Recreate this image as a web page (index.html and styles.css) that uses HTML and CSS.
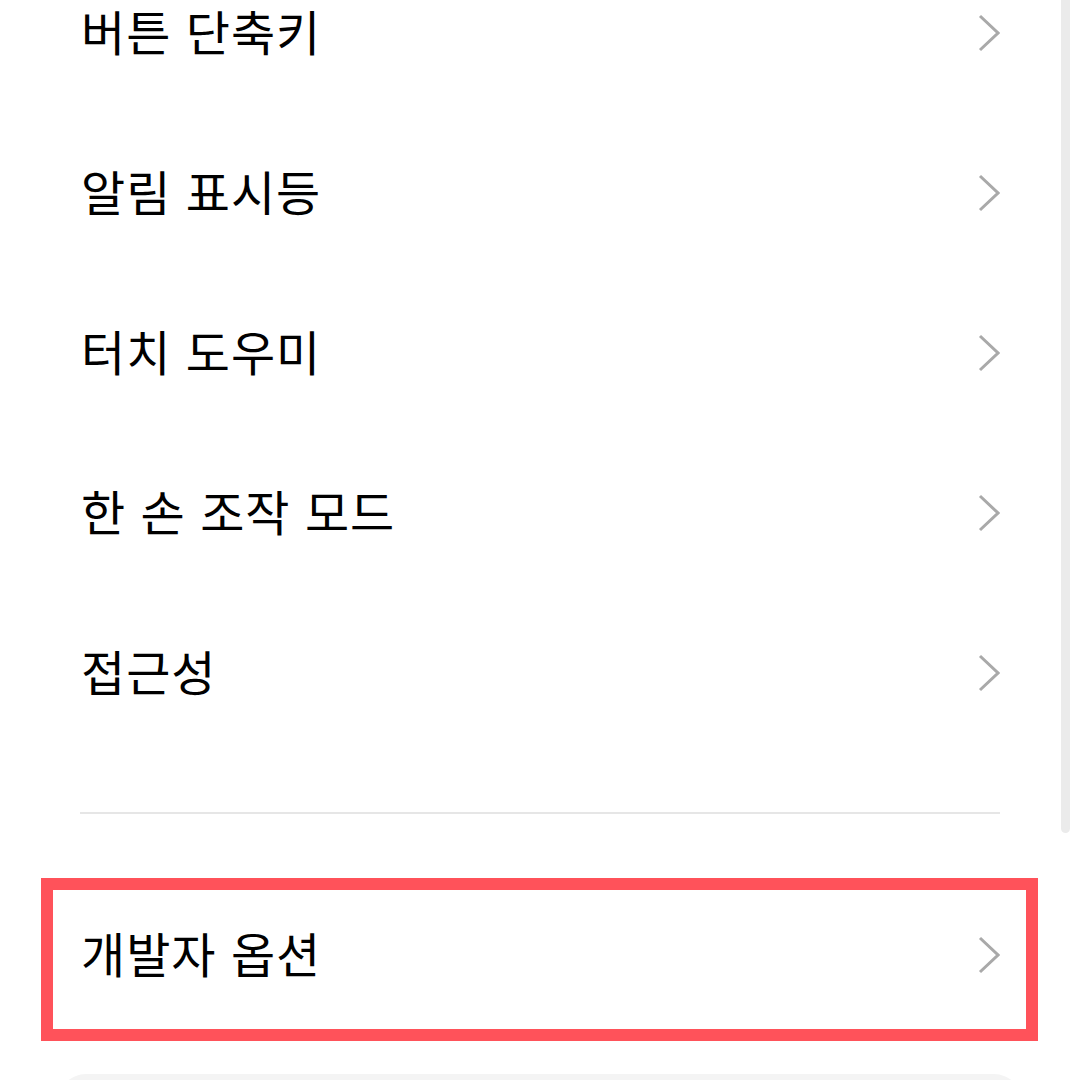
FILE: index.html
```html
<!DOCTYPE html>
<html lang="ko">
<head>
    <meta charset="UTF-8">
    <meta name="viewport" content="width=device-width, initial-scale=1.0">
    <title>설정</title>
    <link rel="stylesheet" href="styles.css">
</head>
<body>
    <div class="screen">
        <div class="settings-list">
            <div class="setting-row">
                <span class="setting-label">버튼 단축키</span>
                <svg class="chevron" width="22" height="38" viewBox="0 0 22 38"><polyline points="2,2 20,19 2,36"/></svg>
            </div>
            <div class="setting-row">
                <span class="setting-label">알림 표시등</span>
                <svg class="chevron" width="22" height="38" viewBox="0 0 22 38"><polyline points="2,2 20,19 2,36"/></svg>
            </div>
            <div class="setting-row">
                <span class="setting-label">터치 도우미</span>
                <svg class="chevron" width="22" height="38" viewBox="0 0 22 38"><polyline points="2,2 20,19 2,36"/></svg>
            </div>
            <div class="setting-row">
                <span class="setting-label">한 손 조작 모드</span>
                <svg class="chevron" width="22" height="38" viewBox="0 0 22 38"><polyline points="2,2 20,19 2,36"/></svg>
            </div>
            <div class="setting-row">
                <span class="setting-label">접근성</span>
                <svg class="chevron" width="22" height="38" viewBox="0 0 22 38"><polyline points="2,2 20,19 2,36"/></svg>
            </div>
        </div>

        <div class="divider"></div>

        <div class="settings-list highlighted">
            <div class="setting-row">
                <span class="setting-label">개발자 옵션</span>
                <svg class="chevron" width="22" height="38" viewBox="0 0 22 38"><polyline points="2,2 20,19 2,36"/></svg>
            </div>
            <div class="highlight-box"></div>
        </div>

        <div class="next-card"></div>

        <div class="scrollbar"></div>
    </div>
</body>
</html>
```

FILE: styles.css
```css
body {
    margin: 0;
    padding: 0;
    background-color: #ffffff;
    font-family: "Noto Sans CJK KR", "Noto Sans", sans-serif;
    color: #000000;
}

.screen {
    position: relative;
    width: 1080px;
    height: 1080px;
    overflow: hidden;
}

.settings-list {
    margin-top: -47px;
    padding: 0 80px;
}

.setting-row {
    display: flex;
    align-items: center;
    justify-content: space-between;
    height: 160px;
}

.setting-label {
    font-size: 48px;
    line-height: 1;
    padding-left: 1px;
    padding-bottom: 6px;
    letter-spacing: 1px;
    word-spacing: 0;
}

.chevron {
    fill: none;
    stroke: #a9a9a9;
    stroke-width: 3;
}

.divider {
    height: 2px;
    margin: 59px 80px 0;
    background: #e6e6e6;
}

.highlighted {
    position: relative;
    margin-top: 61px;
}

.highlight-box {
    position: absolute;
    left: 41px;
    top: 3px;
    width: 973px;
    height: 139px;
    border: 12px solid #ff525a;
}

.next-card {
    height: 80px;
    margin: 39px 58px 0;
    background: #f4f4f4;
    border-radius: 28px;
}

.scrollbar {
    position: absolute;
    top: 0;
    left: 1061px;
    width: 9px;
    height: 833px;
    background: #ebebeb;
    border-radius: 0 0 5px 5px;
}
```
